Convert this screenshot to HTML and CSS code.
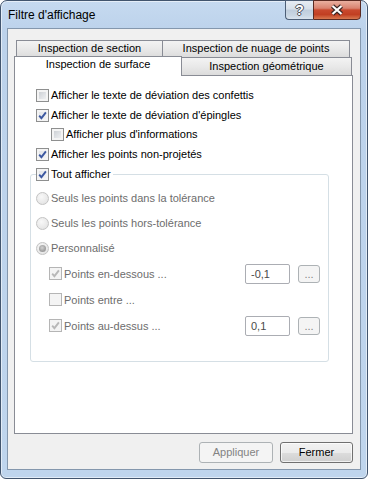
FILE: index.html
```html
<!DOCTYPE html>
<html lang="fr">
<head>
<meta charset="utf-8">
<title>Filtre d'affichage</title>
<link rel="stylesheet" href="styles.css">
</head>
<body>
<div class="window">
  <div class="titlebar">
    <div class="title">Filtre d'affichage</div>
    <div class="caption-btns">
      <div class="cap help">?</div>
      <div class="cap close">
        <svg width="14" height="12" viewBox="0 0 14 12"><path d="M2.5 2 11.5 10M11.5 2 2.5 10" stroke="#3a2623" stroke-width="4.4" fill="none"/><path d="M2.5 2 11.5 10M11.5 2 2.5 10" stroke="#fff" stroke-width="2.2" fill="none"/></svg>
      </div>
    </div>
  </div>
  <div class="client">
    <div class="tabs">
      <div class="tabrow row1">
        <div class="tab t1">Inspection de section</div>
        <div class="tab t2">Inspection de nuage de points</div>
      </div>
      <div class="tabrow row2">
        <div class="tab sel">Inspection de surface</div>
        <div class="tab t4">Inspection géométrique</div>
      </div>
      <div class="pane">
        <div class="row"><span class="cb"></span><span class="lbl">Afficher le texte de déviation des confettis</span></div>
        <div class="row"><span class="cb on"><svg viewBox="0 0 11 11" width="11" height="11"><path d="M2.2 5.6 4.4 8.2 8.9 2.4" fill="none" stroke="currentColor" stroke-width="1.9"/></svg></span><span class="lbl">Afficher le texte de déviation d'épingles</span></div>
        <div class="row indent"><span class="cb"></span><span class="lbl">Afficher plus d'informations</span></div>
        <div class="row"><span class="cb on"><svg viewBox="0 0 11 11" width="11" height="11"><path d="M2.2 5.6 4.4 8.2 8.9 2.4" fill="none" stroke="currentColor" stroke-width="1.9"/></svg></span><span class="lbl">Afficher les points non-projetés</span></div>
        <fieldset class="group">
          <legend class="legend"><span class="cb on"><svg viewBox="0 0 11 11" width="11" height="11"><path d="M2.2 5.6 4.4 8.2 8.9 2.4" fill="none" stroke="currentColor" stroke-width="1.9"/></svg></span><span class="lbl">Tout afficher</span></legend>
          <div class="rrow"><span class="rb"></span><span class="lbl dis">Seuls les points dans la tolérance</span></div>
          <div class="rrow"><span class="rb"></span><span class="lbl dis">Seuls les points hors-tolérance</span></div>
          <div class="rrow"><span class="rb"><span class="dot"></span></span><span class="lbl dis">Personnalisé</span></div>
          <div class="srow"><span class="cb dcb on"><svg viewBox="0 0 11 11" width="11" height="11"><path d="M2.2 5.6 4.4 8.2 8.9 2.4" fill="none" stroke="currentColor" stroke-width="1.9"/></svg></span><span class="lbl dis">Points en-dessous ...</span><span class="field">-0,1</span><span class="ell">...</span></div>
          <div class="srow"><span class="cb dcb"></span><span class="lbl dis">Points entre ...</span></div>
          <div class="srow"><span class="cb dcb on"><svg viewBox="0 0 11 11" width="11" height="11"><path d="M2.2 5.6 4.4 8.2 8.9 2.4" fill="none" stroke="currentColor" stroke-width="1.9"/></svg></span><span class="lbl dis">Points au-dessus ...</span><span class="field">0,1</span><span class="ell">...</span></div>
        </fieldset>
      </div>
    </div>
    <div class="footer">
      <button class="btn dis" type="button">Appliquer</button>
      <button class="btn" type="button">Fermer</button>
    </div>
  </div>
</div>
</body>
</html>
```
FILE: styles.css
```css
* { box-sizing: border-box; }
html, body { margin: 0; padding: 0; }
body {
  width: 368px;
  height: 479px;
  overflow: hidden;
  background: #fff;
  font-family: "Liberation Sans", Arial, sans-serif;
  font-size: 11px;
  color: #000;
}

.window {
  width: 368px;
  height: 479px;
  border: 1px solid #42556e;
  border-radius: 7px 7px 6px 6px;
  background: linear-gradient(to bottom, #c6daf0 0, #bcd2eb 30px, #bfd5ed 100%);
  box-shadow: inset 0 0 0 1px rgba(255, 255, 255, 0.55);
  display: flex;
  flex-direction: column;
  padding: 0 6px 8px 6px;
}

.titlebar {
  flex: none;
  height: 27px;
  display: flex;
  justify-content: space-between;
  align-items: flex-start;
}
.title {
  font-size: 12px;
  line-height: 14px;
  margin: 7px 0 0 1px;
  color: #000;
}
.caption-btns {
  display: flex;
  margin-top: -1px;
}
.cap {
  height: 20px;
  display: flex;
  align-items: center;
  justify-content: center;
}
.help {
  width: 28px;
  border: 1px solid #4d5f77;
  border-right: none;
  border-radius: 0 0 0 4px;
  background: linear-gradient(to bottom, #e6ecf3 0%, #d6dfe9 45%, #bfcddc 50%, #c9d6e3 80%, #dae4ee 100%);
  color: #fff;
  font-weight: bold;
  font-size: 14px;
  line-height: 14px;
  text-shadow: 1px 0 0 #4a4f58, -1px 0 0 #4a4f58, 0 1px 0 #4a4f58, 0 -1px 0 #4a4f58;
}
.close {
  width: 48px;
  border: 1px solid #5a2a22;
  border-radius: 0 0 4px 0;
  background: linear-gradient(to bottom, #eab0a0 0%, #d98370 40%, #c9492e 50%, #c13f22 75%, #d8784f 100%);
}

.client {
  flex: 1;
  background: #f0f0f0;
  border: 1px solid #8497ad;
  padding: 11px 7px 0 6px;
  display: flex;
  flex-direction: column;
}

.tabs {
  flex: 1;
  display: flex;
  flex-direction: column;
}
.tabrow { display: flex; flex: none; }
.row1 { height: 17px; padding-left: 2px; }
.row2 { height: 18px; align-items: flex-end; }
.tab {
  border: 1px solid #898c95;
  border-bottom: none;
  text-align: center;
  line-height: 15px;
  white-space: nowrap;
  background: linear-gradient(to bottom, #f3f3f3 0%, #e9e9e9 50%, #dcdcdc 100%);
}
.t1 { width: 147px; height: 17px; }
.t2 { width: 188px; height: 17px; margin-left: -1px; }
.sel {
  width: 168px;
  height: 20px;
  margin-bottom: -1px;
  background: #fff;
  position: relative;
  z-index: 1;
}
.t4 {
  width: 171px;
  height: 18px;
  margin-left: -1px;
  padding-top: 1px;
}

.pane {
  flex: 1;
  background: #fff;
  border: 1px solid #898c95;
  padding: 10px 0 0 15px;
}

.row {
  display: flex;
  align-items: flex-start;
  height: 19.67px;
  padding-left: 6px;
}
.row .cb { margin-top: 3px; }
.row .lbl { line-height: 19px; }
.row.indent { padding-left: 21px; }

.lbl { margin-left: 2px; white-space: nowrap; }
.lbl.dis { color: #6d6d6d; }

.cb {
  flex: none;
  width: 13px;
  height: 13px;
  border: 1px solid #8e8f8f;
  background: linear-gradient(135deg, #c4c8cd 0%, #e3e5e8 60%, #f6f6f6 100%);
  box-shadow: inset 0 0 0 2px #f4f4f4;
  color: #3c58a0;
  display: block;
}
.cb.on { background: linear-gradient(135deg, #dfe2e6 0%, #f4f5f6 100%); }
.cb svg { display: block; }
.dcb {
  border-color: #b5b5b5;
  background: #f4f4f4;
  box-shadow: none;
  color: #b8b8b8;
}
.dcb.on { background: #f4f4f4; }

.rb {
  flex: none;
  width: 13px;
  height: 13px;
  border-radius: 50%;
  border: 1px solid #c3c3c3;
  background: radial-gradient(circle at 40% 35%, #f8f8f8 0%, #e9e9e9 60%, #dedede 100%);
  display: flex;
  align-items: center;
  justify-content: center;
}
.dot {
  width: 7px;
  height: 7px;
  border-radius: 50%;
  background: radial-gradient(circle at 45% 40%, #d2d2d2 0%, #a3a3a3 55%, #8a8a8a 100%);
}

.group {
  margin: 3px 0 0 0;
  padding: 5px 8px 22px 5px;
  border: 1px solid #d5dfe5;
  border-radius: 3px;
  width: 299px;
  min-width: 0;
}
.legend {
  padding: 0 2px 0 0;
  height: 13px;
  display: flex;
  align-items: center;
}
.legend .lbl { line-height: 13px; }

.rrow {
  display: flex;
  align-items: center;
  height: 25px;
}
.srow {
  display: flex;
  align-items: center;
  height: 26px;
  padding-left: 13px;
}
.field {
  margin-left: auto;
  width: 45px;
  height: 20px;
  border: 1px solid #abadb3;
  border-radius: 2px;
  background: #fff;
  padding-left: 5px;
  line-height: 18px;
  color: #4a4a4a;
}
.ell {
  width: 22px;
  height: 18px;
  margin-left: 8px;
  border: 1px solid #adb2b5;
  border-radius: 3px;
  background: #f4f4f4;
  color: #838383;
  text-align: center;
  line-height: 16px;
}

.footer {
  flex: none;
  display: flex;
  justify-content: flex-end;
  gap: 7px;
  margin: 8px 0 6px 0;
}
.btn {
  font: inherit;
  margin: 0;
  width: 73px;
  height: 21px;
  padding: 0;
  border: 1px solid #707070;
  border-radius: 3px;
  background: linear-gradient(to bottom, #f2f2f2 0%, #ebebeb 50%, #dddddd 50%, #cfcfcf 100%);
  box-shadow: inset 0 0 0 1px rgba(255, 255, 255, 0.7);
  color: #000;
  line-height: 19px;
  text-align: center;
}
.btn.dis {
  width: 74px;
  border-color: #adb2b5;
  background: #f4f4f4;
  box-shadow: none;
  color: #838383;
}
```
